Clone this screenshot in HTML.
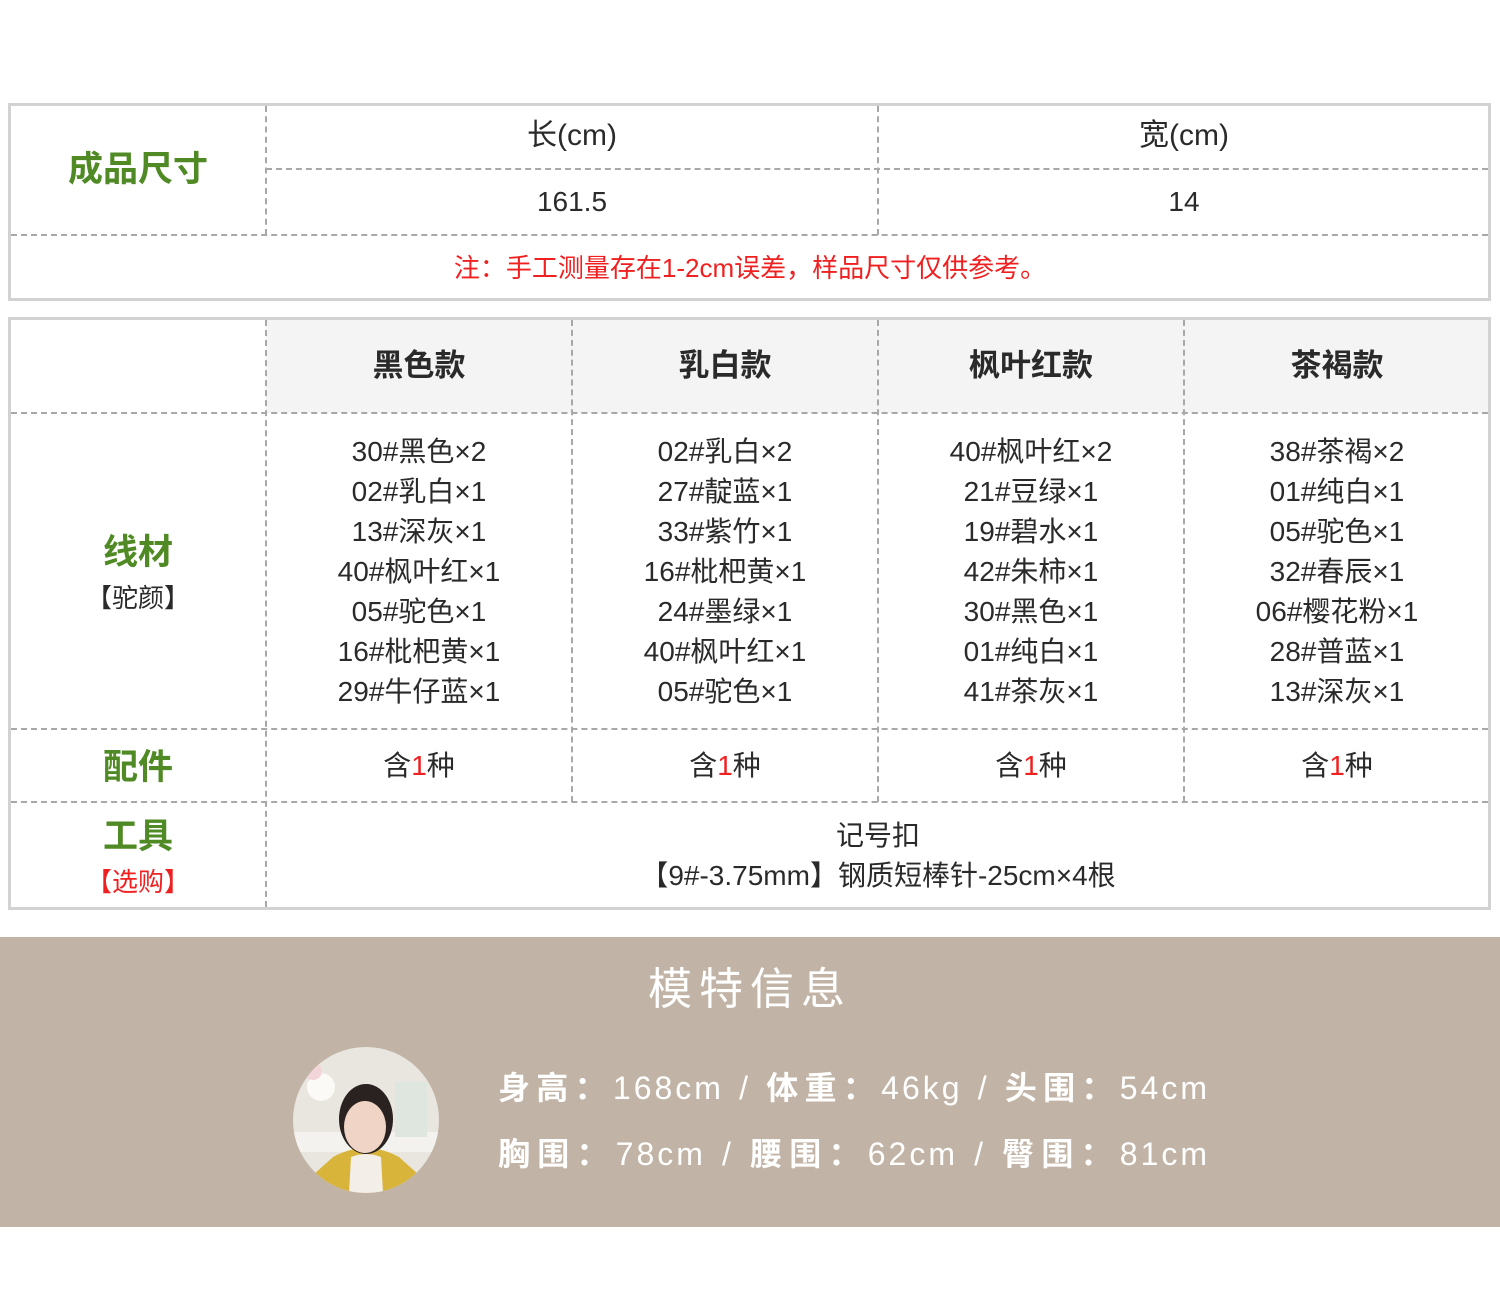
<!DOCTYPE html>
<html><head><meta charset="utf-8"><style>
*{margin:0;padding:0;box-sizing:border-box}
body{width:1500px;height:1292px;background:#fff;position:relative;overflow:hidden;font-family:"Liberation Sans","Noto Sans CJK SC",sans-serif;color:#2a2a2a}
.a{position:absolute}
.box{position:absolute;border:3px solid #d2d2d2}
.h{position:absolute;height:0;border-top:2px dashed #a8a8a8}
.v{position:absolute;width:0;border-left:2px dashed #a8a8a8}
.t{position:absolute;text-align:center;font-size:28px;line-height:40px;white-space:nowrap;margin-top:1px}
.g{color:#4f8a24;font-weight:bold;font-size:35px}
.hd{font-weight:bold;font-size:31px;color:#2a2a2a}
.r{color:#f02020}
</style></head><body>
<div class="box" style="left:8px;top:103px;width:1483px;height:198px"></div>
<div class="v" style="left:265px;top:106px;height:129px"></div>
<div class="v" style="left:877px;top:106px;height:129px"></div>
<div class="h" style="left:266px;top:168px;width:1222px"></div>
<div class="h" style="left:11px;top:234px;width:1477px"></div>
<div class="t g" style="left:10px;width:256px;top:149px">成品尺寸</div>
<div class="t" style="left:266px;width:612px;top:115px;font-size:30px">长(cm)</div>
<div class="t" style="left:878px;width:612px;top:115px;font-size:30px">宽(cm)</div>
<div class="t" style="left:266px;width:612px;top:181px">161.5</div>
<div class="t" style="left:878px;width:612px;top:181px">14</div>
<div class="t r" style="left:10px;width:1480px;top:247px;font-size:26px">注：手工测量存在1-2cm误差，样品尺寸仅供参考。</div>

<div class="a" style="left:266px;top:320px;width:1222px;height:93px;background:#f4f4f4"></div>
<div class="box" style="left:8px;top:317px;width:1483px;height:593px"></div>
<div class="v" style="left:265px;top:320px;height:587px"></div>
<div class="v" style="left:571px;top:320px;height:482px"></div>
<div class="v" style="left:877px;top:320px;height:482px"></div>
<div class="v" style="left:1183px;top:320px;height:482px"></div>
<div class="h" style="left:11px;top:412px;width:1477px"></div>
<div class="h" style="left:11px;top:728px;width:1477px"></div>
<div class="h" style="left:11px;top:801px;width:1477px"></div>

<div class="t hd" style="left:266px;width:306px;top:345px">黑色款</div>
<div class="t hd" style="left:572px;width:306px;top:345px">乳白款</div>
<div class="t hd" style="left:878px;width:306px;top:345px">枫叶红款</div>
<div class="t hd" style="left:1184px;width:306px;top:345px">茶褐款</div>

<div class="t g" style="left:10px;width:256px;top:532px">线材</div>
<div class="t" style="left:10px;width:256px;top:577px;font-size:26px">【驼颜】</div>

<div class="t" style="left:266px;width:306px;top:431px">30#黑色×2<br>02#乳白×1<br>13#深灰×1<br>40#枫叶红×1<br>05#驼色×1<br>16#枇杷黄×1<br>29#牛仔蓝×1</div>
<div class="t" style="left:572px;width:306px;top:431px">02#乳白×2<br>27#靛蓝×1<br>33#紫竹×1<br>16#枇杷黄×1<br>24#墨绿×1<br>40#枫叶红×1<br>05#驼色×1</div>
<div class="t" style="left:878px;width:306px;top:431px">40#枫叶红×2<br>21#豆绿×1<br>19#碧水×1<br>42#朱柿×1<br>30#黑色×1<br>01#纯白×1<br>41#茶灰×1</div>
<div class="t" style="left:1184px;width:306px;top:431px">38#茶褐×2<br>01#纯白×1<br>05#驼色×1<br>32#春辰×1<br>06#樱花粉×1<br>28#普蓝×1<br>13#深灰×1</div>

<div class="t g" style="left:10px;width:256px;top:747px">配件</div>
<div class="t" style="left:266px;width:306px;top:745px">含<span class="r">1</span>种</div>
<div class="t" style="left:572px;width:306px;top:745px">含<span class="r">1</span>种</div>
<div class="t" style="left:878px;width:306px;top:745px">含<span class="r">1</span>种</div>
<div class="t" style="left:1184px;width:306px;top:745px">含<span class="r">1</span>种</div>

<div class="t g" style="left:10px;width:256px;top:816px">工具</div>
<div class="t r" style="left:10px;width:256px;top:861px;font-size:26px">【选购】</div>
<div class="t" style="left:266px;width:1224px;top:815px">记号扣<br>【9#-3.75mm】钢质短棒针-25cm×4根</div>

<div class="a" style="left:0;top:937px;width:1500px;height:290px;background:#c1b4a6"></div>
<div class="t" style="left:0;width:1500px;top:963px;color:#fff;font-size:44px;line-height:52px;letter-spacing:7px">模特信息</div>
<svg class="a" style="left:293px;top:1047px" width="146" height="146" viewBox="0 0 146 146">
<defs><clipPath id="c"><circle cx="73" cy="73" r="73"/></clipPath></defs>
<g clip-path="url(#c)">
<rect width="146" height="146" fill="#e9e6df"/>
<rect x="0" y="85" width="146" height="20" fill="#f4f2ee"/>
<circle cx="28" cy="40" r="14" fill="#fbfaf6"/><circle cx="20" cy="24" r="9" fill="#f2d5d8"/>
<rect x="102" y="35" width="32" height="55" fill="#dfe6e0"/>
<path d="M40 110 Q73 92 106 110 L146 146 L0 146Z" fill="#d9b43a"/>
<path d="M58 110 Q73 104 88 110 L90 146 L56 146Z" fill="#f3efe8"/>
<ellipse cx="73" cy="72" rx="27" ry="35" fill="#2a2220"/>
<ellipse cx="72" cy="80" rx="21" ry="26" fill="#f0d5c6"/>
<path d="M50 70 Q56 38 80 42 Q96 48 96 72 Q88 52 70 52 Q56 56 50 70Z" fill="#2a2220"/>
</g></svg>
<div class="a" style="left:498px;top:1066px;width:712px;color:#fff;font-size:32px;line-height:44px;letter-spacing:3px;text-align:justify;text-align-last:justify;white-space:nowrap"><b>身高：</b>168cm / <b>体重：</b>46kg / <b>头围：</b>54cm</div>
<div class="a" style="left:498px;top:1132px;width:712px;color:#fff;font-size:32px;line-height:44px;letter-spacing:3px;text-align:justify;text-align-last:justify;white-space:nowrap"><b>胸围：</b>78cm / <b>腰围：</b>62cm / <b>臀围：</b>81cm</div>
</body></html>
